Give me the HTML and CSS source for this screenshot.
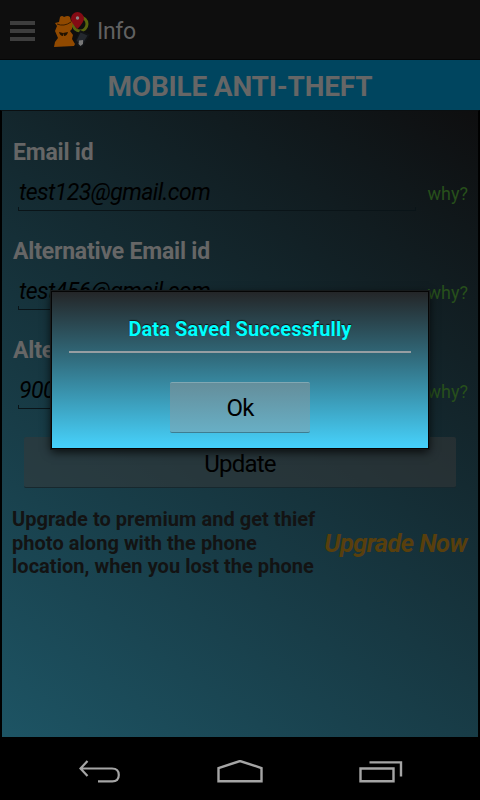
FILE: index.html
```html
<!DOCTYPE html>
<html lang="en">
<head>
    <meta charset="UTF-8">
    <meta name="viewport" content="width=device-width, initial-scale=1.0">
    <title>Mobile Anti-Theft</title>
    <link rel="stylesheet" href="styles.css">
</head>
<body>
    <div class="screen">
        <header class="action-bar">
            <div class="menu-icon"><span></span><span></span><span></span></div>
            <svg class="app-icon" width="38" height="40" viewBox="0 0 38 40">
                <circle cx="26" cy="14" r="7" fill="none" stroke="#59640e" stroke-width="3"/>
                <path d="M26 20L36 24.500L28 38.500L20 34Z" fill="#111315"/>
                <path d="M26.500 22.500L33.500 25.500L28.500 34L22.500 31Z" fill="#24282e"/>
                <path d="M25 30.500l4-.5v4l-2.500 2-2-2z" fill="#777"/>
                <path d="M6 7Q8 5 10 7Q14 5 16 7L17 11Q20 13 18 16L18 19L16 21L19 25L18 29L21 34L20 36L0 37L1 32L4 28L1 21L3 16L1 13L5 12Z" fill="#904900"/>
                <path d="M3 14Q10 17 17 12" fill="none" stroke="#391d00" stroke-width="1"/>
                <path d="M5 22l4 1v3q-3 0-4-4zM9 23l5-1q-1 4-4 4z" fill="#211200"/>
                <path d="M23.500 19Q17 13 17 8.500A6.500 6.500 0 0 1 30 8.500Q30 12 23.500 19Z" fill="#830b14"/>
                <circle cx="23.500" cy="8" r="1.700" fill="#888"/>
            </svg>
            <h1>Info</h1>
        </header>
        <div class="banner">MOBILE ANTI-THEFT</div>
        <main class="content">
            <section class="field">
                <h2>Email id</h2>
                <div class="field-row">
                    <div class="input">test123@gmail.com</div>
                    <a class="why">why?</a>
                </div>
            </section>
            <section class="field">
                <h2>Alternative Email id</h2>
                <div class="field-row">
                    <div class="input">test456@gmail.com</div>
                    <a class="why">why?</a>
                </div>
            </section>
            <section class="field">
                <h2>Alte</h2>
                <div class="field-row">
                    <div class="input">900</div>
                    <a class="why">why?</a>
                </div>
            </section>
            <button class="update">Update</button>
            <div class="upgrade">
                <p>Upgrade to premium and get thief<br>photo along with the phone<br>location, when you lost the phone</p>
                <a>Upgrade Now</a>
            </div>
        </main>
        <nav class="nav-bar">
            <svg width="42" height="26" viewBox="0 0 42 26">
                <path d="M8.500 1L1.500 8.500L8.500 16M1.500 8.500H33Q39.800 8.500 39.800 15T33 21.300H19" fill="none" stroke="#a5a5a5" stroke-width="2.200"/>
            </svg>
            <svg width="46" height="26" viewBox="0 0 46 26">
                <path d="M1.500 21.300V8L23 1L44.500 8V21.300Z" fill="none" stroke="#a5a5a5" stroke-width="2.400"/>
            </svg>
            <svg width="44" height="26" viewBox="0 0 44 26">
                <path d="M1.500 8.500H34.500V21.300H1.500ZM10.500 2.400H42V16.500" fill="none" stroke="#a5a5a5" stroke-width="2.400"/>
            </svg>
        </nav>
        <div class="dialog">
            <h3>Data Saved Successfully</h3>
            <button class="ok">Ok</button>
        </div>
    </div>
</body>
</html>
```
FILE: styles.css
```css
body {
    margin: 0;
    background: #000;
    font-family: Roboto, "Liberation Sans", sans-serif;
}
h1, h2, h3, p {
    margin: 0;
}
button {
    font-family: inherit;
    border: none;
    border-radius: 2px;
    padding: 0;
    box-sizing: border-box;
}
.screen {
    position: relative;
    width: 480px;
    height: 800px;
    overflow: hidden;
    display: flex;
    flex-direction: column;
}
.action-bar {
    height: 60px;
    box-sizing: border-box;
    padding-left: 10px;
    display: flex;
    align-items: center;
    background: #0e0e0e;
    border-bottom: 1px solid #060606;
}
.menu-icon {
    width: 25px;
    display: flex;
    flex-direction: column;
    gap: 4px;
    margin-top: 2px;
}
.menu-icon span {
    height: 4px;
    background: #3e3e3e;
}
.app-icon {
    margin-left: 19px;
}
.action-bar h1 {
    margin-left: 5px;
    margin-top: 3px;
    font-size: 23px;
    font-weight: 400;
    letter-spacing: -0.3px;
    color: #616161;
}
.banner {
    height: 50px;
    line-height: 53px;
    text-align: center;
    font-size: 28px;
    font-weight: 700;
    letter-spacing: -0.2px;
    color: #666;
    background: #00455f;
}
.content {
    height: 629px;
    box-sizing: border-box;
    padding: 28px 10px 0 10px;
    border: 2px solid #000;
    border-top: 1px solid #0b0f11;
    background: linear-gradient(35deg, #1d5464, #0e0e0f);
}
.field {
    height: 99px;
}
.field h2 {
    height: 26px;
    padding-left: 1px;
    line-height: 27px;
    font-size: 23px;
    font-weight: 700;
    letter-spacing: -0.2px;
    color: #666;
}
.field-row {
    display: flex;
    justify-content: space-between;
    padding-left: 6px;
}
.input {
    position: relative;
    width: 398px;
    height: 46px;
    box-sizing: border-box;
    padding-left: 1px;
    line-height: 56px;
    font-size: 23px;
    font-style: italic;
    letter-spacing: -0.55px;
    color: #000;
}
.input::after {
    content: "";
    position: absolute;
    left: 0;
    right: 0;
    bottom: 0;
    height: 4px;
    border: 1px solid #0a1418;
    border-top: none;
    box-sizing: border-box;
}
.why {
    line-height: 57px;
    font-size: 18px;
    color: #274f1b;
}
.update {
    display: block;
    width: 432px;
    height: 51px;
    margin: 1px 0 0 12px;
    padding-top: 3px;
    font-size: 24px;
    letter-spacing: -0.8px;
    color: #000;
    background: rgba(55, 55, 55, 0.5);
    border-bottom: 1px solid #17282e;
}
.upgrade {
    display: flex;
    align-items: center;
    justify-content: space-between;
    margin-top: 20px;
}
.upgrade p {
    font-size: 20px;
    font-weight: 700;
    letter-spacing: 0.04px;
    line-height: 23.500px;
    white-space: nowrap;
    color: #131313;
}
.upgrade a {
    margin-right: 1px;
    font-size: 25.500px;
    font-weight: 700;
    font-style: italic;
    letter-spacing: -0.6px;
    white-space: nowrap;
    color: #583f0d;
}
.nav-bar {
    height: 61px;
    display: flex;
    justify-content: center;
    padding: 21px 0 0 2px;
    gap: 96px;
    box-sizing: border-box;
    background: #000;
}
.dialog {
    position: absolute;
    left: 51px;
    top: 291px;
    width: 378px;
    height: 158px;
    box-sizing: border-box;
    border: 1px solid #050505;
    padding: 0 17px;
    background: linear-gradient(#242628, #316b7c 42%, #45cbf3 96%, #45d1fc);
    box-shadow: 0 0 0 1px #161a1b, 0 3px 9px rgba(0, 0, 0, 0.8);
    text-align: center;
}
.dialog h3 {
    height: 59px;
    line-height: 74px;
    font-size: 20px;
    font-weight: 700;
    letter-spacing: 0.1px;
    color: #0ff;
    text-shadow: 0 -1px 1px #111;
    border-bottom: 2px solid #979ea2;
}
.ok {
    width: 140px;
    height: 51px;
    margin-top: 29px;
    padding-top: 1px;
    font-size: 24px;
    letter-spacing: -0.8px;
    color: #000;
    background: linear-gradient(#648e9b, #68afc5);
    border-top: 1px solid #81a8b3;
    border-bottom: 1px solid #3e7d91;
}
```
